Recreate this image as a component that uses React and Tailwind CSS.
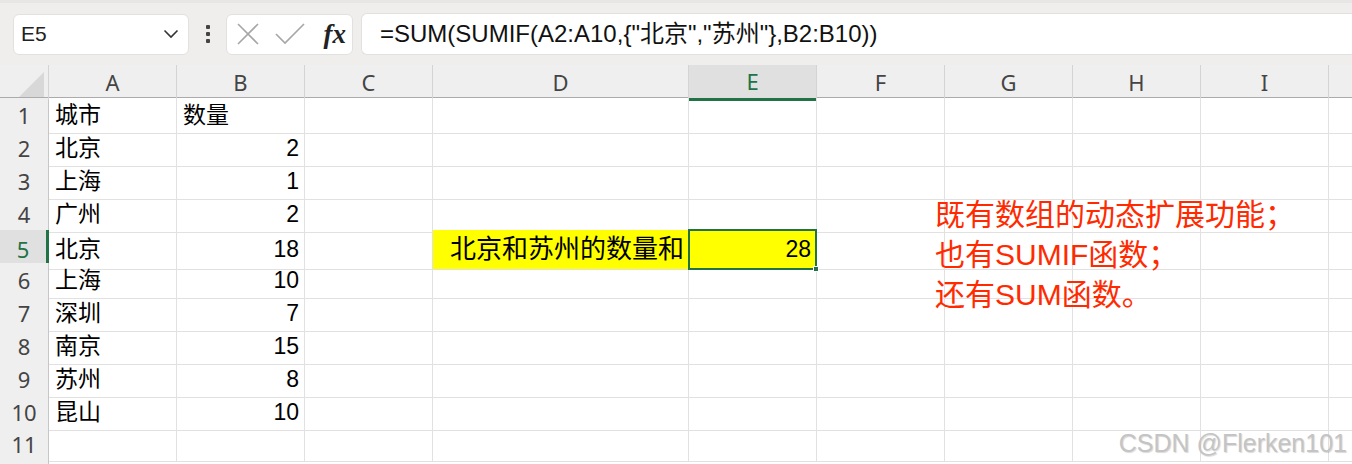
import React from 'react';

// Tabela de exemplo (colunas A e B)
const rows = [
  ['城市', '数量'],
  ['北京', 2],
  ['上海', 1],
  ['广州', 2],
  ['北京', 18],
  ['上海', 10],
  ['深圳', 7],
  ['南京', 15],
  ['苏州', 8],
  ['昆山', 10],
  ['', ''],
];

const cols = ['A', 'B', 'C', 'D', 'E', 'F', 'G', 'H', 'I'];

const cellFont = { fontFamily: '"Liberation Sans", "Noto Sans CJK SC", sans-serif' };
const headFont = { fontFamily: '"Noto Sans", "Liberation Sans", sans-serif' };

const Toolbar = () => (
  <div className="h-[65px] bg-[#f0eeec] flex items-center pl-[13px] border-t-[3px] border-[#e8e6e4]">
    {/* Caixa de nome */}
    <div className="w-[176px] h-[41px] bg-white rounded-[6px] border border-[#e3e1df] flex items-center justify-between pl-[7px] pr-[9px]">
      <span className="text-[21px] text-[#222]" style={cellFont}>E5</span>
      <svg width="16" height="10" viewBox="0 0 16 10" fill="none" stroke="#333" strokeWidth="1.6">
        <path d="M1.5 1.5 L8 8 L14.5 1.5" />
      </svg>
    </div>
    <div className="w-[37px] flex flex-col items-center justify-center gap-[3px]">
      <span className="w-[4px] h-[4px] bg-[#444] rounded-[1px]" />
      <span className="w-[4px] h-[4px] bg-[#444] rounded-[1px]" />
      <span className="w-[4px] h-[4px] bg-[#444] rounded-[1px]" />
    </div>
    {/* Cancelar / confirmar / fx */}
    <div className="w-[127px] h-[41px] bg-white rounded-[6px] border border-[#e3e1df] flex items-center pl-[9px] pr-[6px]">
      <svg width="24" height="24" viewBox="0 0 24 24" fill="none" stroke="#a6a6a6" strokeWidth="1.6">
        <path d="M2 2 L22 22 M22 2 L2 22" />
      </svg>
      <svg className="ml-[15px]" width="30" height="22" viewBox="0 0 30 22" fill="none" stroke="#a6a6a6" strokeWidth="1.6">
        <path d="M1 11 L10 20 L29 1" />
      </svg>
      <span
        className="ml-auto text-[27px] italic font-bold text-[#222] leading-none"
        style={{ fontFamily: '"Liberation Serif", "DejaVu Serif", serif' }}
      >
        fx
      </span>
    </div>
    {/* Barra de fórmula */}
    <div className="ml-[8px] flex-1 h-[42px] bg-white rounded-l-[6px] border border-r-0 border-[#e3e1df] flex items-center pl-[18px]">
      <span className="text-[24px] text-[#111]" style={cellFont}>
        {'=SUM(SUMIF(A2:A10,{"北京","苏州"},B2:B10))'}
      </span>
    </div>
  </div>
);

const gridCols = 'grid grid-cols-[49px_128px_128px_128px_256px_128px_128px_128px_128px_128px_1fr]';

const ColHeader = () => (
  <div className={`${gridCols} h-[33px] bg-[#efefef] border-b border-[#ababab]`} style={headFont}>
    <div className="relative border-r border-[#d4d4d4]">
      <div
        className="absolute right-[4px] bottom-[3px] w-[25px] h-[25px] bg-[#d8d8d8]"
        style={{ clipPath: 'polygon(100% 0, 100% 100%, 0 100%)' }}
      />
    </div>
    {cols.map((c) =>
      c === 'E' ? (
        <div key={c} className="bg-[#e0e0e0] border-r border-[#d4d4d4] border-b-[3px] border-b-[#217346] -mb-[1px] flex items-center justify-center text-[22px] text-[#217346]">
          {c}
        </div>
      ) : (
        <div key={c} className="border-r border-[#d4d4d4] flex items-center justify-center text-[22px] text-[#444]">
          {c}
        </div>
      )
    )}
    <div />
  </div>
);

const Row = ({ n, a, b }) => {
  const active = n === 5;
  const isText = typeof b === 'string';
  return (
    <div className={`${gridCols} h-[33px]`}>
      <div
        className={
          active
            ? 'bg-[#e0e0e0] border-r-[3px] border-[#217346] border-b border-b-[#d4d4d4] flex items-center justify-center text-[22px] text-[#217346]'
            : 'bg-[#efefef] border-r border-[#c6c6c6] border-b border-b-[#d4d4d4] flex items-center justify-center text-[22px] text-[#444]'
        }
        style={headFont}
      >
        {n}
      </div>
      <div className="border-r border-b border-[#e1e1e1] flex items-center pl-[6px] text-[23px] text-black" style={cellFont}>
        {a}
      </div>
      <div
        className={
          isText
            ? 'border-r border-b border-[#e1e1e1] flex items-center pl-[6px] text-[23px] text-black'
            : 'border-r border-b border-[#e1e1e1] flex items-center justify-end pr-[5px] text-[23px] text-black'
        }
        style={cellFont}
      >
        {b}
      </div>
      <div className="border-r border-b border-[#e1e1e1]" />
      {active ? (
        <div className="bg-[#ffff00] border-b border-[#e1e1e1] flex items-center justify-end pr-[5px] text-[26px] text-black whitespace-nowrap" style={cellFont}>
          北京和苏州的数量和
        </div>
      ) : (
        <div className="border-r border-b border-[#e1e1e1]" />
      )}
      {active ? (
        <div className="relative bg-[#ffff00] border-r border-b border-[#e1e1e1] flex items-center justify-end pr-[5px] text-[23px] text-black" style={cellFont}>
          28
          <div className="absolute -left-[1px] -top-[1px] -right-[1px] -bottom-[1px] border-2 border-[#217346]" />
          <div className="absolute -right-[3px] -bottom-[3px] w-[6px] h-[6px] bg-[#217346] border border-white" />
        </div>
      ) : (
        <div className="border-r border-b border-[#e1e1e1]" />
      )}
      {['F', 'G', 'H', 'I'].map((c) => (
        <div key={c} className="border-r border-b border-[#e1e1e1]" />
      ))}
      <div className="border-b border-[#e1e1e1]" />
    </div>
  );
};

export default function App() {
  return (
    <div className="w-[1352px] h-[464px] overflow-hidden bg-white relative">
      <Toolbar />
      <ColHeader />
      <div>
        {rows.map((r, i) => (
          <Row key={i} n={i + 1} a={r[0]} b={r[1]} />
        ))}
        <div className={`${gridCols} h-[33px]`}>
          <div className="bg-[#efefef] border-r border-[#c6c6c6]" />
        </div>
      </div>

      {/* Nota em vermelho sobre as células */}
      <div
        className="absolute left-[935px] top-[195px] text-[30px] leading-[40px] text-[#ff2a00] whitespace-nowrap"
        style={cellFont}
      >
        <p>既有数组的动态扩展功能；</p>
        <p>也有SUMIF函数；</p>
        <p>还有SUM函数。</p>
      </div>

      {/* Marca d'água */}
      <div
        className="absolute right-[5px] top-[425px] text-[25px] text-[#c4c4c4]"
        style={{ ...cellFont, textShadow: '1px 1px 1px rgba(0,0,0,0.15)' }}
      >
        CSDN @Flerken101
      </div>
    </div>
  );
}
